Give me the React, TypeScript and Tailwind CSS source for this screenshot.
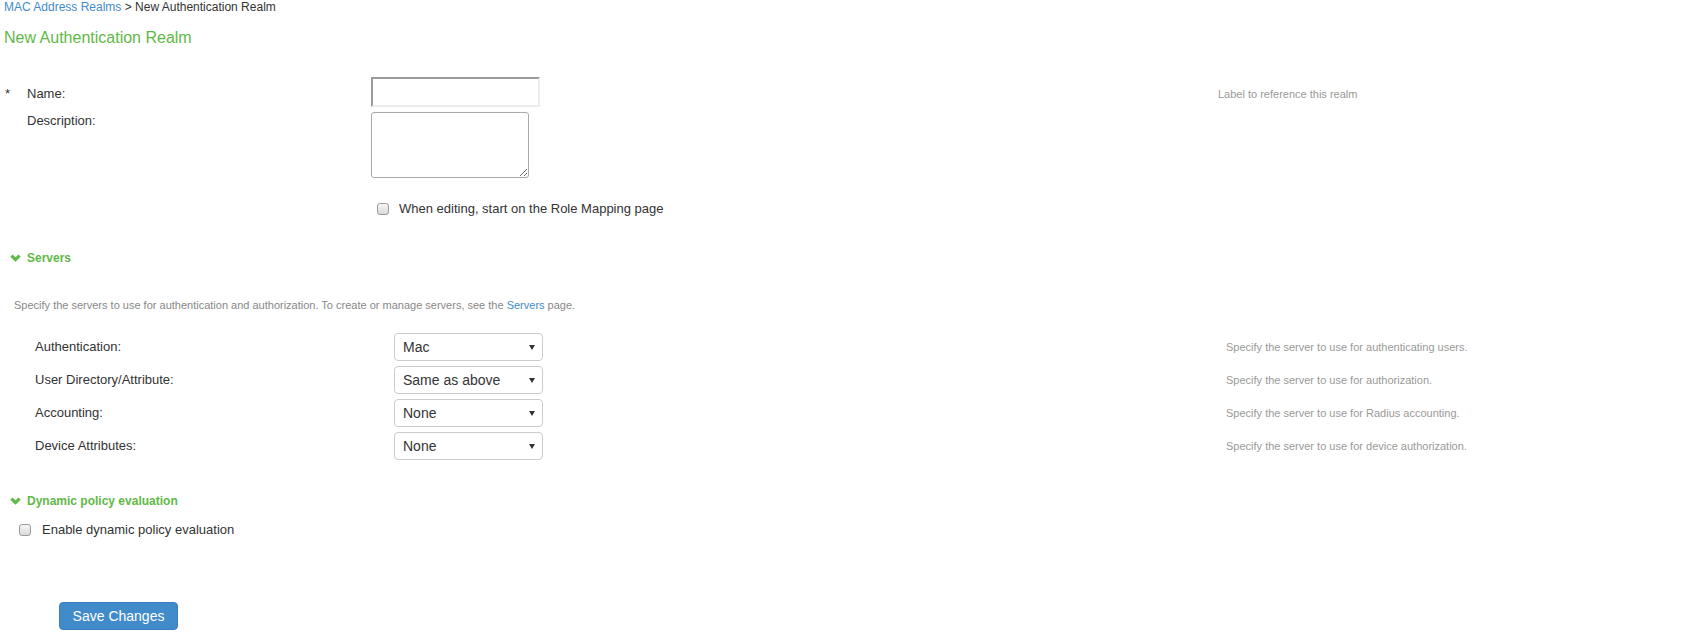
const green = "text-[#5fb946]";

const Chevron = () => (
  <svg width="11" height="8" viewBox="0 0 11 8" className="shrink-0">
    <polyline
      points="1.4,1.6 5.5,5.6 9.6,1.6"
      fill="none"
      stroke="#5fb946"
      strokeWidth="3.2"
    />
  </svg>
);

const Box = () => (
  <span className="inline-block w-[12px] h-[12px] shrink-0 rounded-[3px] border border-[#9a9a9a] bg-gradient-to-b from-[#f6f6f6] to-[#dadada]" />
);

const Select = ({ value }: { value: string }) => (
  <div className="w-[149px] h-[28px] flex items-center justify-between pl-[8px] pr-[7px] border border-[#cccccc] rounded-[4px] bg-white text-[14px] text-[#333]">
    <span>{value}</span>
    <svg width="6" height="5" viewBox="0 0 6 5">
      <polygon points="0,0 6,0 3,5" fill="#333" />
    </svg>
  </div>
);

const servers = [
  { label: "Authentication:", value: "Mac", help: "Specify the server to use for authenticating users." },
  { label: "User Directory/Attribute:", value: "Same as above", help: "Specify the server to use for authorization." },
  { label: "Accounting:", value: "None", help: "Specify the server to use for Radius accounting." },
  { label: "Device Attributes:", value: "None", help: "Specify the server to use for device authorization." },
];

export default function App() {
  return (
    <div className="w-[1683px] h-[637px] bg-white text-[#333] font-['Liberation_Sans',Arial,sans-serif]">
      {/* breadcrumb */}
      <div className="h-[15px] pl-[4px] text-[12px] leading-[15px]">
        <span className="text-[#428bca]">MAC Address Realms</span> &gt; New Authentication Realm
      </div>
      <div className={`mt-[13px] pl-[4px] text-[16px] leading-[20px] ${green}`}>
        New Authentication Realm
      </div>

      {/* name */}
      <div className="mt-[29px] grid grid-cols-[27px_344px_847px_1fr] h-[30px] text-[13px] leading-[16px]">
        <div className="pl-[5px] pt-[9px]">*</div>
        <div className="pt-[9px]">Name:</div>
        <div>
          <input className="w-[169px] h-[30px] border-2 border-t-[#9a9a9a] border-l-[#9a9a9a] border-r-[#ececec] border-b-[#ececec] outline-none" />
        </div>
        <div className="self-center mt-[3px] text-[11px] text-[#999]">Label to reference this realm</div>
      </div>

      {/* description */}
      <div className="mt-[5px] grid grid-cols-[27px_344px_1fr] text-[13px] leading-[16px]">
        <div />
        <div className="pt-[1px]">Description:</div>
        <div>
          <textarea className="block w-[158px] h-[66px] border border-[#a9a9a9] rounded-[3px] outline-none" />
        </div>
      </div>

      <div className="mt-[22px] h-[18px] pl-[377px] flex items-center gap-[10px] text-[13px]">
        <Box />
        <span>When editing, start on the Role Mapping page</span>
      </div>

      {/* servers */}
      <div className={`mt-[32px] h-[16px] pl-[10px] flex items-center gap-[6px] text-[12px] font-bold ${green}`}>
        <Chevron />
        <span>Servers</span>
      </div>
      <div className="mt-[31px] h-[16px] pl-[14px] flex items-center text-[11px] text-[#888]">
        <span>
          Specify the servers to use for authentication and authorization. To create or manage servers, see the{" "}
          <span className="text-[#428bca]">Servers</span> page.
        </span>
      </div>

      <div className="mt-[20px] flex flex-col gap-[5px]">
        {servers.map((s) => (
          <div key={s.label} className="grid grid-cols-[35px_359px_832px_1fr] h-[28px] items-center text-[13px]">
            <div />
            <div>{s.label}</div>
            <div>
              <Select value={s.value} />
            </div>
            <div className="text-[11px] text-[#999]">{s.help}</div>
          </div>
        ))}
      </div>

      {/* dynamic policy */}
      <div className={`mt-[33px] h-[16px] pl-[10px] flex items-center gap-[6px] text-[12px] font-bold ${green}`}>
        <Chevron />
        <span>Dynamic policy evaluation</span>
      </div>
      <div className="mt-[12px] h-[18px] pl-[19px] flex items-center gap-[11px] text-[13px]">
        <Box />
        <span>Enable dynamic policy evaluation</span>
      </div>

      <div className="mt-[63px] pl-[59px]">
        <button className="w-[119px] h-[28px] rounded-[4px] bg-[#428bca] border border-[#3a80c0] text-white text-[14px]">
          Save Changes
        </button>
      </div>
    </div>
  );
}
